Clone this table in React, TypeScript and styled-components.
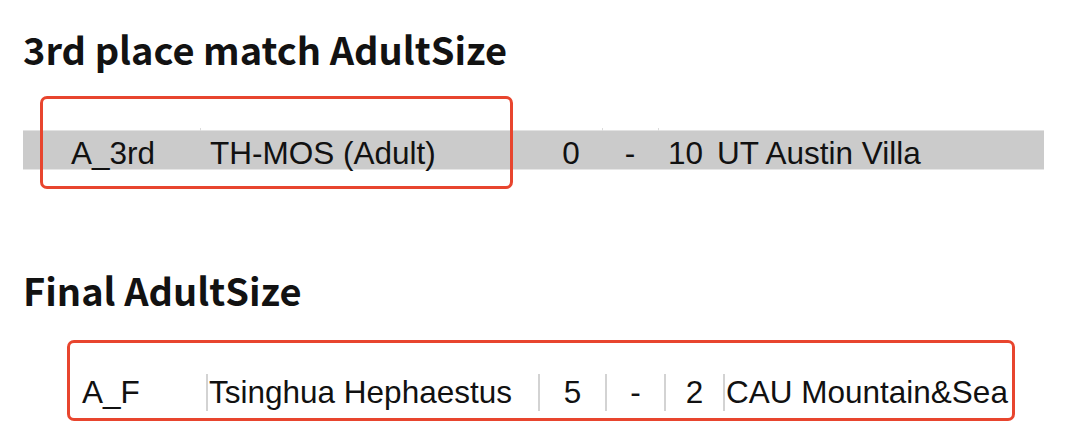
import React from "react";
import styled, { createGlobalStyle } from "styled-components";

const Global = createGlobalStyle`
  html, body { margin: 0; padding: 0; background: #ffffff; }
  body { width: 1080px; height: 441px; overflow: hidden; }
`;

const Page = styled.div`
  box-sizing: border-box;
  width: 1080px;
  height: 441px;
  padding: 28px 36px 0 23px;
  display: flex;
  flex-direction: column;
  color: #111111;
`;

const Heading = styled.h2<{ $gap: number }>`
  margin: 0 0 ${(p) => p.$gap}px 0;
  font-family: "Noto Sans CJK SC", "Noto Sans", sans-serif;
  font-weight: 700;
  font-size: 38px;
  line-height: 42px;
  color: #121212;
`;

const TableWrap = styled.div<{ $after: number }>`
  position: relative;
  margin-bottom: ${(p) => p.$after}px;
`;

const BarRow = styled.div`
  display: grid;
  grid-template-columns: 177px 340px 62px 56px 54px 1fr;
  height: 40px;
  box-sizing: border-box;
  background: #cbcbcb;
  border-top: 1px solid #e2e2e2;
  border-bottom: 1px solid #e6e6e6;
  padding-top: 4px;
`;

const Cell = styled.div<{ $align?: "left" | "center" | "right"; $pl?: number; $pr?: number; $tick?: boolean; $sep?: boolean }>`
  position: relative;
  font-family: "Liberation Sans", Arial, sans-serif;
  font-size: 31.5px;
  line-height: normal;
  white-space: nowrap;
  overflow: visible;
  color: #111111;
  text-align: ${(p) => p.$align ?? "left"};
  padding-left: ${(p) => p.$pl ?? 0}px;
  padding-right: ${(p) => p.$pr ?? 0}px;
  border-left: ${(p) => (p.$sep ? "2px solid #d3d3d3" : "none")};
  &::before {
    content: "";
    display: ${(p) => (p.$tick ? "block" : "none")};
    position: absolute;
    left: 0;
    top: -7px;
    width: 1px;
    height: 3px;
    background: #dcdcdc;
  }
`;

const Highlight = styled.div`
  position: absolute;
  left: 17px;
  top: -34px;
  width: 473px;
  height: 93px;
  box-sizing: border-box;
  border: 3px solid #e8452e;
  border-radius: 7px;
  pointer-events: none;
`;

const BoxedRow = styled.div`
  margin-left: 44px;
  width: 948px;
  box-sizing: border-box;
  border: 3px solid #e8452e;
  border-radius: 7px;
  padding: 31px 0 7px 0;
`;

const PlainRow = styled.div`
  display: grid;
  grid-template-columns: 136px 332px 67px 59px 59px 1fr;
  overflow: hidden;
`;

export default function App() {
  return (
    <>
      <Global />
      <Page>
        <Heading $gap={60}>3rd place match AdultSize</Heading>
        <TableWrap $after={99}>
          <BarRow>
            <Cell $pl={48}>A_3rd</Cell>
            <Cell $pl={10} $tick>TH-MOS (Adult)</Cell>
            <Cell $align="center">0</Cell>
            <Cell $align="center" $tick>-</Cell>
            <Cell $align="right" $pr={9} $tick>10</Cell>
            <Cell $pl={5}>UT Austin Villa</Cell>
          </BarRow>
          <Highlight />
        </TableWrap>
        <Heading $gap={29}>Final AdultSize</Heading>
        <BoxedRow>
          <PlainRow>
            <Cell $pl={12}>A_F</Cell>
            <Cell $pl={1} $sep>Tsinghua Hephaestus</Cell>
            <Cell $align="center" $sep>5</Cell>
            <Cell $align="center" $sep>-</Cell>
            <Cell $align="center" $sep>2</Cell>
            <Cell $pl={1} $sep>CAU Mountain&amp;Sea</Cell>
          </PlainRow>
        </BoxedRow>
      </Page>
    </>
  );
}
